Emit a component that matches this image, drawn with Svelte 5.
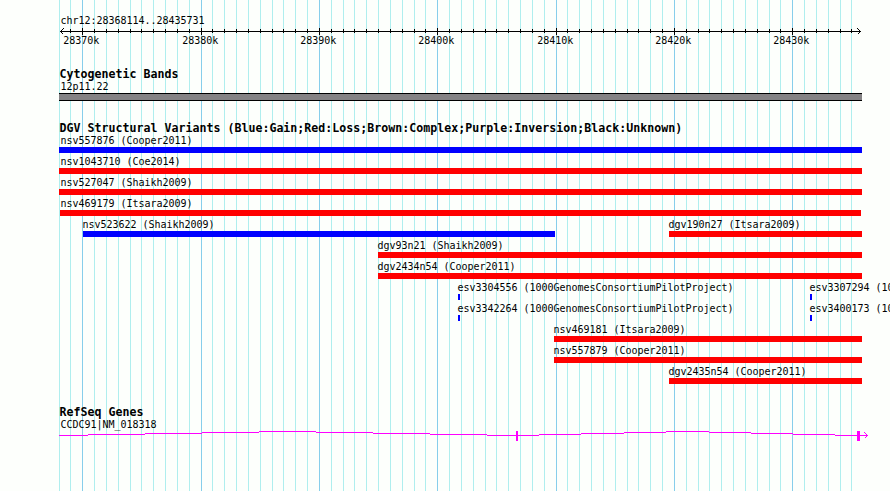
<script lang="ts">
	type Feature = { name: string; start: number; end: number; kind: 'gain' | 'loss' };

	const HEIGHT = 491;
	const LEFT = 59;
	const RIGHT = 862;

	// one line per kilobase, 71px for every six of them
	const lines = Array.from({ length: 68 }, (_, i) => {
		const k = i - 2;
		return { kb: 28370 + k, x: 82 + Math.floor((k * 71) / 6 + 0.7), major: k % 10 === 0 };
	}).filter((l) => l.x < RIGHT);
	const majors = lines.filter((l) => l.major);
	const ticks = lines.filter((l) => l.x > LEFT);

	const rows: Feature[][] = [
		[{ name: 'nsv557876 (Cooper2011)', start: 59, end: 862, kind: 'gain' }],
		[{ name: 'nsv1043710 (Coe2014)', start: 59, end: 862, kind: 'loss' }],
		[{ name: 'nsv527047 (Shaikh2009)', start: 59, end: 862, kind: 'loss' }],
		[{ name: 'nsv469179 (Itsara2009)', start: 60, end: 861, kind: 'loss' }],
		[
			{ name: 'nsv523622 (Shaikh2009)', start: 83, end: 555, kind: 'gain' },
			{ name: 'dgv190n27 (Itsara2009)', start: 669, end: 862, kind: 'loss' }
		],
		[{ name: 'dgv93n21 (Shaikh2009)', start: 378, end: 862, kind: 'loss' }],
		[{ name: 'dgv2434n54 (Cooper2011)', start: 378, end: 862, kind: 'loss' }],
		[
			{ name: 'esv3304556 (1000GenomesConsortiumPilotProject)', start: 458, end: 460, kind: 'gain' },
			{ name: 'esv3307294 (1000GenomesConsortiumPilotProject)', start: 810, end: 812, kind: 'gain' }
		],
		[
			{ name: 'esv3342264 (1000GenomesConsortiumPilotProject)', start: 458, end: 460, kind: 'gain' },
			{ name: 'esv3400173 (1000GenomesConsortiumPilotProject)', start: 810, end: 812, kind: 'gain' }
		],
		[{ name: 'nsv469181 (Itsara2009)', start: 554, end: 862, kind: 'loss' }],
		[{ name: 'nsv557879 (Cooper2011)', start: 554, end: 862, kind: 'loss' }],
		[{ name: 'dgv2435n54 (Cooper2011)', start: 669, end: 862, kind: 'loss' }]
	];

	// intron steps: [from, to, y]
	const introns = [
		[59, 88, 5], [88, 145, 4], [145, 202, 3], [202, 259, 2], [259, 316, 1],
		[316, 373, 2], [373, 430, 3], [430, 487, 4], [487, 539, 5],
		[539, 581, 4], [581, 624, 3], [624, 666, 2], [666, 709, 1],
		[709, 751, 2], [751, 793, 3], [793, 835, 4], [835, 867, 5]
	];

	const labelShift = (f: Feature) => Math.max(60.5, f.start - 0.5) - f.start;
</script>

<main class="browser">
	<svg class="grid" width="890" height={HEIGHT} aria-hidden="true">
		{#each lines as l (l.kb)}
			<rect class:major={l.major} x={l.x} y="0" width="1" height={HEIGHT} />
		{/each}
	</svg>

	<section class="ruler">
		<div class="label">chr12:28368114..28435731</div>
		<svg class="scale" width="890" height="22">
			<rect x="60" y="4" width="801" height="1" />
			{#each ticks as t (t.kb)}
				<rect x={t.x} y={t.major ? 1 : 2} width="1" height={t.major ? 7 : 4} />
			{/each}
			<path d="M63.5 1.5 60.5 4.5 63.5 7.5M857.5 1.5 860.5 4.5 857.5 7.5" />
			{#each majors as m (m.kb)}
				<text x={m.x - 18.7} y="17">{m.kb}k</text>
			{/each}
		</svg>
	</section>

	<section class="bands">
		<h2>Cytogenetic Bands</h2>
		<div class="label">12p11.22</div>
		<div class="band"></div>
	</section>

	<section class="variants">
		<h2>DGV Structural Variants (Blue:Gain;Red:Loss;Brown:Complex;Purple:Inversion;Black:Unknown)</h2>
		{#each rows as row}
			<div class="row">
				{#each row as f (f.name)}
					<div class="feature" style="margin-left:{f.start}px">
						<div class="name" style="text-indent:{labelShift(f)}px">{f.name}</div>
						<div class="bar {f.kind}" style="width:{f.end - f.start}px"></div>
					</div>
				{/each}
			</div>
		{/each}
	</section>

	<section class="genes">
		<h2>RefSeq Genes</h2>
		<div class="label">CCDC91|NM_018318</div>
		<svg class="gene" width="890" height="12">
			{#each introns as [from, to, y]}
				<rect x={from} {y} width={to - from} height="1" />
			{/each}
			<rect x="516" y="1" width="2" height="10" />
			<rect x="857" y="1" width="3" height="10" />
			<path d="M864.5 2.5 867.5 5.5 864.5 8.5" />
		</svg>
	</section>
</main>

<style>
	:global(body) {
		background: #fdfffc;
	}
	.browser {
		position: relative;
		width: 890px;
		height: 491px;
		overflow: hidden;
		color: #000;
		font: 10px/12px 'DejaVu Sans Mono', monospace;
		letter-spacing: -0.02px;
	}
	.grid {
		position: absolute;
		inset: 0;
		z-index: -1;
		fill: #afeeee;
	}
	.grid .major {
		fill: #87ceeb;
	}
	svg {
		display: block;
		shape-rendering: crispEdges;
	}
	path {
		fill: none;
		stroke-width: 1;
	}
	h2 {
		margin: 0 0 0 59.5px;
		font-size: 11.6px;
		line-height: 14px;
		letter-spacing: 0.016px;
		white-space: nowrap;
	}
	.label {
		height: 12px;
		margin-left: 60.5px;
	}
	.ruler {
		padding-top: 15px;
	}
	.scale path {
		stroke: #000;
	}
	.bands {
		padding-top: 18px;
	}
	.band {
		box-sizing: border-box;
		width: 803px;
		height: 8px;
		margin-left: 59px;
		background: #848284;
		border: solid #000;
		border-width: 1px 0;
	}
	.variants {
		padding-top: 20px;
	}
	.row {
		display: grid;
		height: 21px;
	}
	.feature {
		grid-area: 1 / 1;
		width: 0;
	}
	.name {
		height: 12px;
		white-space: nowrap;
	}
	.bar {
		height: 6px;
	}
	.gain {
		background: #00f;
	}
	.loss {
		background: #f00;
	}
	.genes {
		padding-top: 18px;
	}
	.genes .label {
		height: 11px;
	}
	.gene {
		fill: #f0f;
	}
	.gene path {
		stroke: #f0f;
	}
</style>
